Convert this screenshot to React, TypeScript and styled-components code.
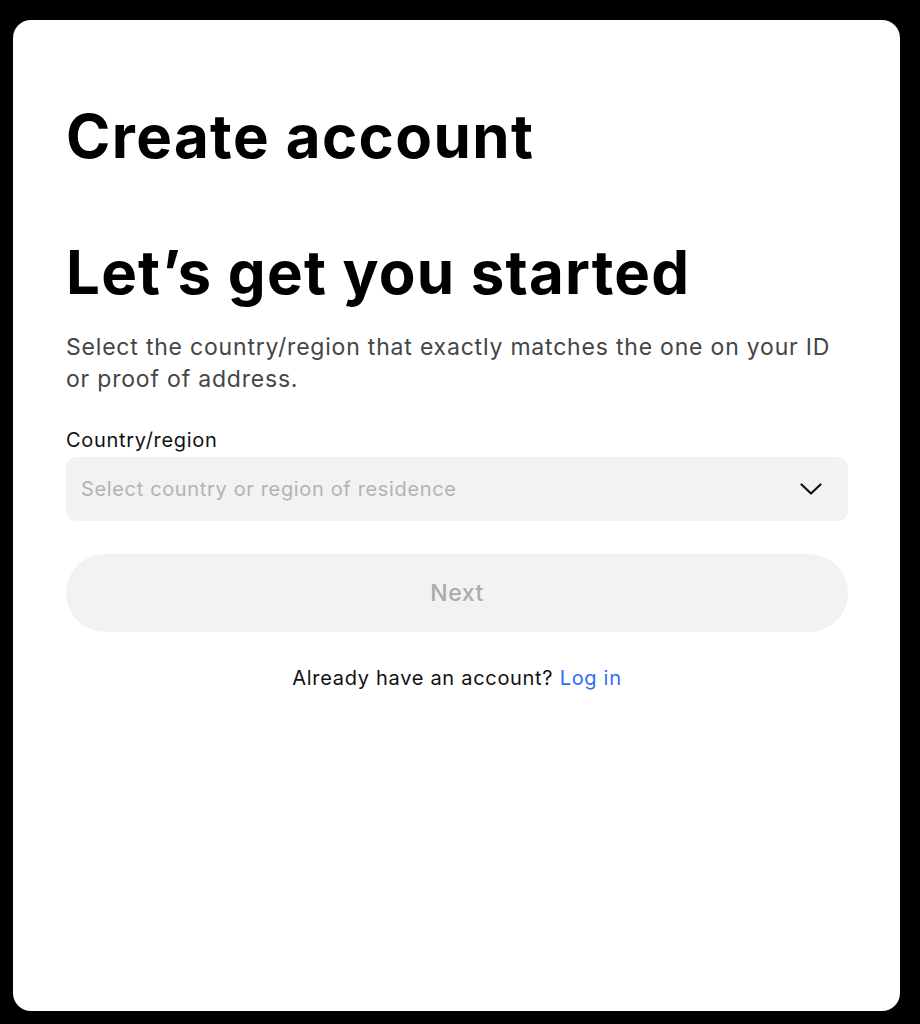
import styled, { createGlobalStyle } from "styled-components";

const GlobalStyle = createGlobalStyle`
  html, body {
    margin: 0;
    padding: 0;
    background: #000;
  }
  body {
    font-family: Inter, "Liberation Sans", sans-serif;
    -webkit-font-smoothing: antialiased;
  }
`;

const Page = styled.div`
  width: 920px;
  height: 1024px;
  box-sizing: border-box;
  padding: 20px 20px 13px 13px;
  background: #000;
`;

const Card = styled.main`
  height: 100%;
  box-sizing: border-box;
  background: #fff;
  border-radius: 18px;
  padding: 82px 52px 0 53px;
  display: flex;
  flex-direction: column;
`;

const Title = styled.h1`
  margin: 0;
  font-size: 60px;
  line-height: 68px;
  font-weight: 700;
  letter-spacing: 1.4px;
  color: #000;
`;

const Heading = styled(Title).attrs({ as: "h2" })`
  margin-top: 68px;
  letter-spacing: 1.2px;
`;

const Intro = styled.p`
  margin: 25px 0 0;
  font-size: 23px;
  line-height: 32px;
  letter-spacing: 0.8px;
  color: #454545;
`;

const Field = styled.label`
  margin-top: 33px;
  display: flex;
  flex-direction: column;
  gap: 5px;
`;

const FieldLabel = styled.span`
  font-size: 20px;
  line-height: 24px;
  letter-spacing: 0.7px;
  color: #111;
`;

const Select = styled.button`
  height: 64px;
  border: none;
  border-radius: 10px;
  background: #f2f2f2;
  padding: 0 26px 0 15px;
  display: flex;
  align-items: center;
  justify-content: space-between;
  font-family: inherit;
  font-size: 20px;
  letter-spacing: 0.65px;
  color: #b3b3b3;
  cursor: pointer;
`;

const NextButton = styled.button`
  margin-top: 33px;
  height: 78px;
  border: none;
  border-radius: 39px;
  background: #f2f2f2;
  font-family: inherit;
  font-size: 23px;
  font-weight: 500;
  letter-spacing: 0.5px;
  color: #ababab;
`;

const Footer = styled.p`
  margin: 32px 0 0;
  text-align: center;
  font-size: 20px;
  line-height: 28px;
  letter-spacing: 0.7px;
  color: #111;
`;

const LoginLink = styled.a`
  color: #2f6fed;
  text-decoration: none;
`;

function Chevron() {
  return (
    <svg width="22" height="12" viewBox="0 0 22 12" fill="none">
      <path d="M1.5 1.5 L11 10.5 L20.5 1.5" stroke="#111" strokeWidth="2.2" strokeLinecap="round" strokeLinejoin="round" />
    </svg>
  );
}

function App() {
  return (
    <Page>
      <GlobalStyle />
      <Card>
        <Title>Create account</Title>
        <Heading>Let’s get you started</Heading>
        <Intro>
          Select the country/region that exactly matches the one on your ID or proof of address.
        </Intro>
        <Field>
          <FieldLabel>Country/region</FieldLabel>
          <Select type="button">
            Select country or region of residence
            <Chevron />
          </Select>
        </Field>
        <NextButton type="button" disabled>
          Next
        </NextButton>
        <Footer>
          Already have an account? <LoginLink href="#">Log in</LoginLink>
        </Footer>
      </Card>
    </Page>
  );
}

export default App;
